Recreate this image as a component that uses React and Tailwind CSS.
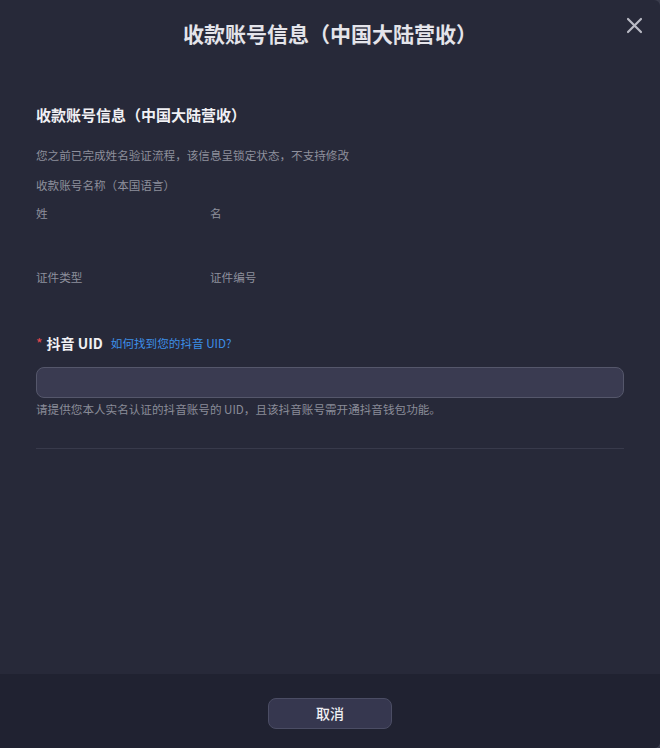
import React from "react";

export default function App() {
  const font = { fontFamily: '"Noto Sans CJK SC", "Noto Sans", sans-serif' };
  return (
    <div className="w-[660px] h-[748px] bg-[#3a3c4c]" style={font}>
      <div className="relative w-[660px] h-[748px] flex flex-col bg-[#272939] rounded-r-[6px] overflow-hidden">
        <button className="absolute right-[17px] top-[17px] text-[#b9bac4]">
          <svg width="17" height="17" viewBox="0 0 17 17" fill="none" stroke="currentColor" strokeWidth="2.2" strokeLinecap="round">
            <path d="M2 2L15 15M15 2L2 15" />
          </svg>
        </button>
        <div className="flex-1 flex flex-col">
          <div className="pt-[17px] text-center text-[21px] leading-[32px] font-bold text-[#e4e4ea]">
            收款账号信息（中国大陆营收）
          </div>
          <div className="px-[36px] pt-[55px]">
            <div className="text-[15px] leading-[22px] font-bold text-[#f0f0f4]">收款账号信息（中国大陆营收）</div>
            <div className="mt-[20px] text-[11.6px] leading-[18px] text-[#8e909c]">
              您之前已完成姓名验证流程，该信息呈锁定状态，不支持修改
            </div>
            <div className="mt-[12px] text-[11.6px] leading-[18px] text-[#8e909c]">收款账号名称（本国语言）</div>
            <div className="mt-[10px] grid grid-cols-[174px_1fr] text-[11.6px] leading-[18px] text-[#8e909c]">
              <div>姓</div>
              <div>名</div>
            </div>
            <div className="mt-[46px] grid grid-cols-[174px_1fr] text-[11.6px] leading-[18px] text-[#8e909c]">
              <div>证件类型</div>
              <div>证件编号</div>
            </div>
            <div className="mt-[47px] flex items-center">
              <span className="text-[#e5484d] text-[14px] mr-[4px] leading-[20px]">*</span>
              <span className="text-[14px] leading-[20px] font-semibold text-[#f0f0f4]">抖音 UID</span>
              <span className="ml-[8px] text-[11.6px] leading-[20px] text-[#3d8fe8]">如何找到您的抖音 UID?</span>
            </div>
            <div className="mt-[14px] h-[31px] rounded-[8px] border border-[#55576b] bg-[#3a3b51]" />
            <div className="mt-[2px] text-[11.6px] leading-[18px] text-[#8a8c98]">
              请提供您本人实名认证的抖音账号的 UID，且该抖音账号需开通抖音钱包功能。
            </div>
            <div className="mt-[30px] h-px bg-[#383a4b]" />
          </div>
        </div>
        <div className="h-[74px] bg-[#202231] flex items-start pt-[24px] pl-[268px]">
          <button className="w-[124px] h-[31px] rounded-[8px] border border-[#4b4d64] bg-[#36374f] text-[14px] text-[#f0f0f4] font-medium">
            取消
          </button>
        </div>
      </div>
    </div>
  );
}
